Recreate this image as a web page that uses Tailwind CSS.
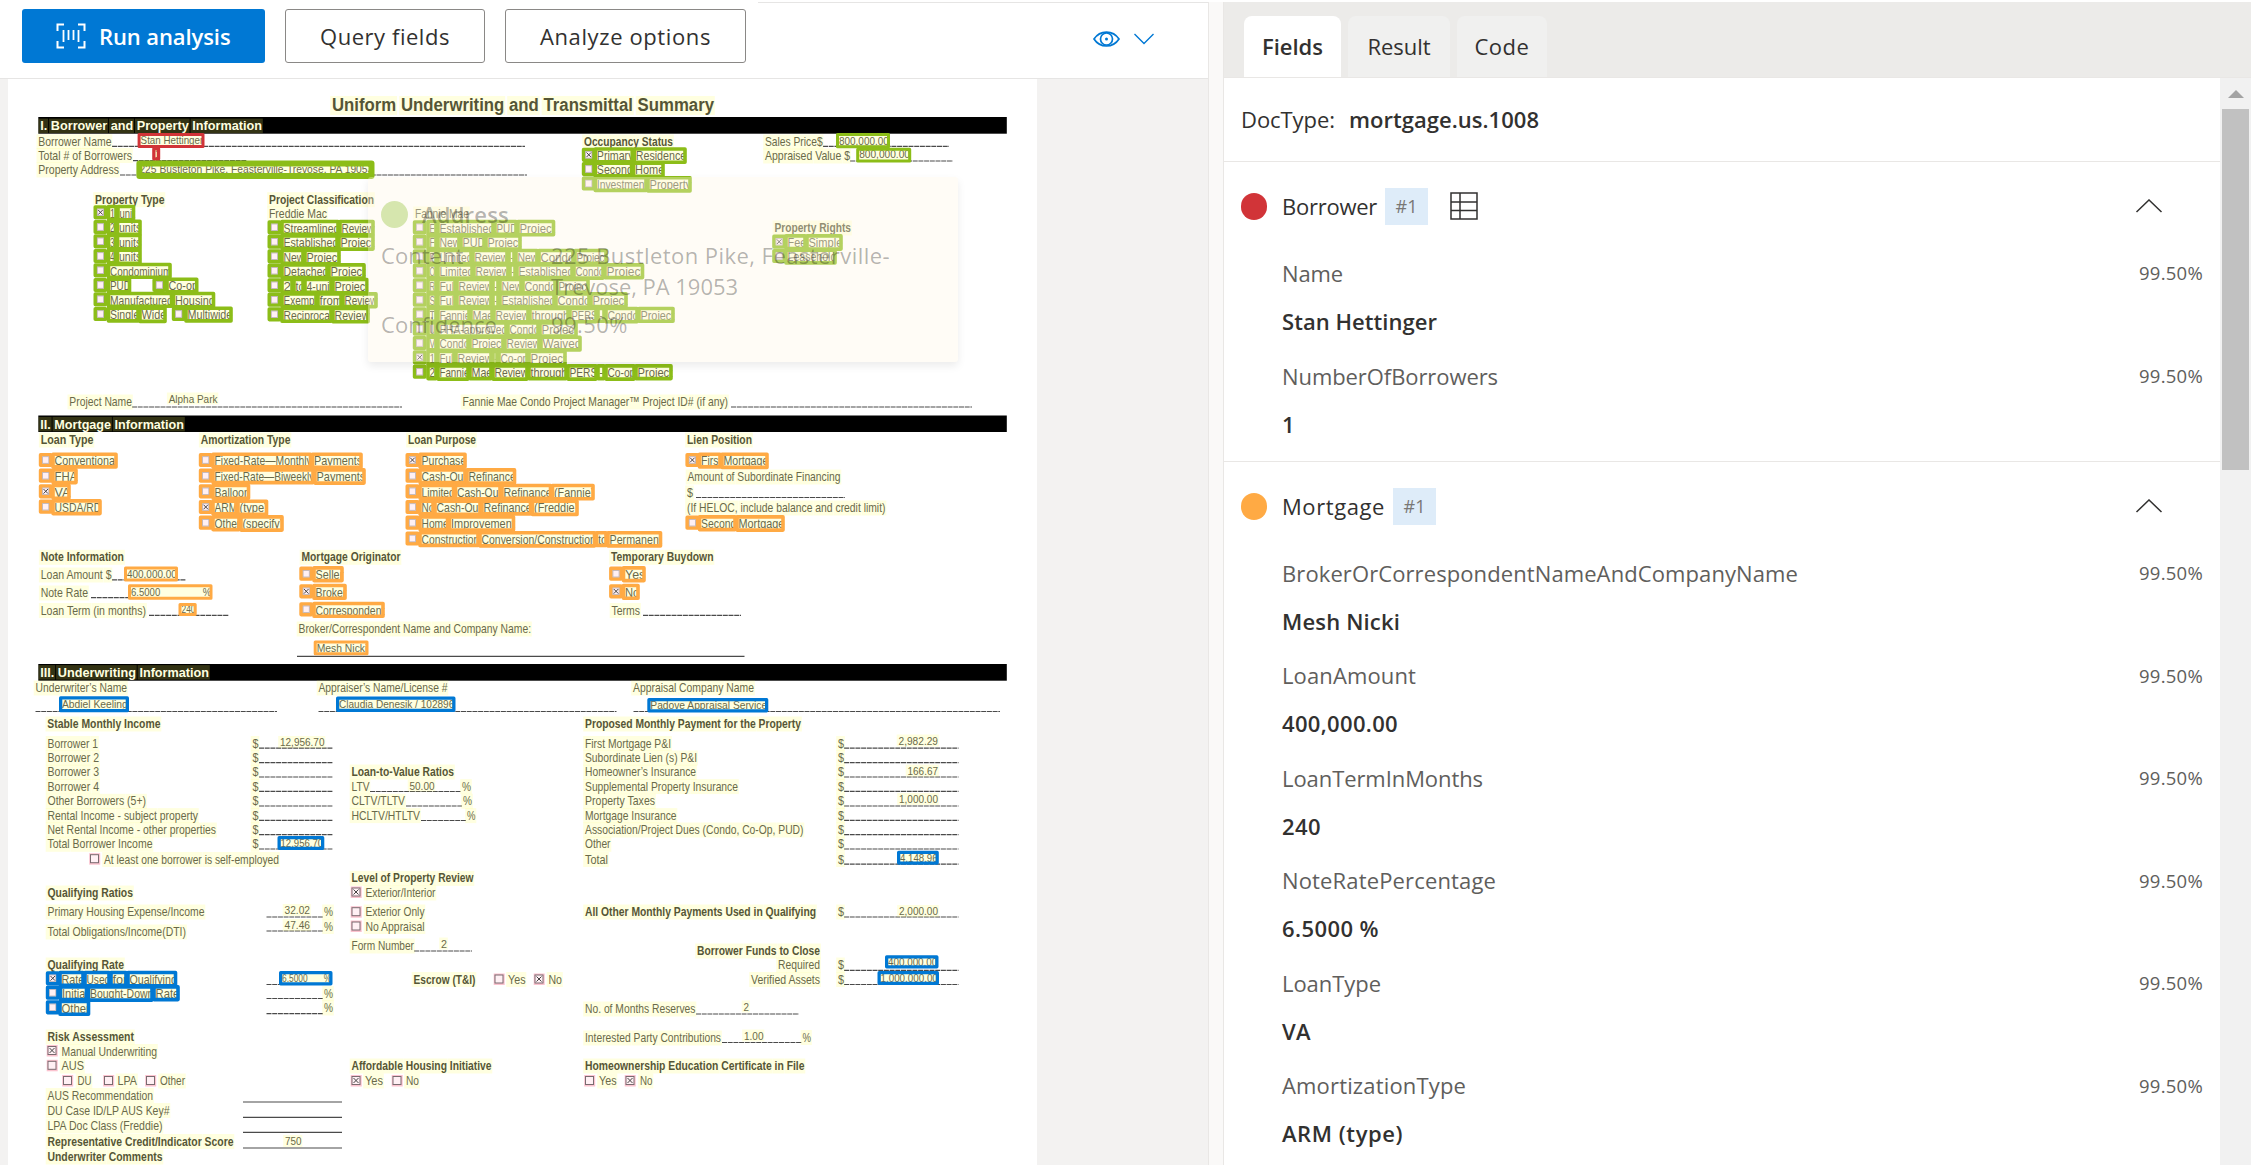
<!DOCTYPE html>
<html lang="en">
<head>
<meta charset="utf-8">
<title>Document analysis</title>
<script src="https://cdn.jsdelivr.net/npm/@tailwindcss/browser@4"></script>
</head>
<body class="h-[1165px] w-[2251px] overflow-hidden bg-white font-['Open_Sans','Noto_Sans',sans-serif] text-[#323130]">
<div class="flex h-full w-full">

  <!-- Document pane -->
  <main class="flex h-full w-[1208px] shrink-0 flex-col">
    <header class="relative flex h-[79px] shrink-0 items-start border-b border-[#e6e5e4] bg-white pl-[22px] pt-[9px] text-[22px]">
      <div class="absolute right-0 top-[2px] h-px w-[450px] bg-[#e6e5e4]"></div>
      <button class="flex h-[54px] w-[243px] items-center rounded-[3px] bg-[#0078d4] pl-[34px] font-semibold text-white">
        <svg class="mr-[13px] h-[26px] w-[30px] shrink-0" viewBox="0 0 30 26" fill="none" stroke="currentColor" stroke-width="2"><path d="M8 1.500H1.500V8M22 1.500h6.500V8M8 24.500H1.500V18M22 24.500h6.500V18"/><path stroke-width="1.800" d="M7.500 7v12M12.500 7v10M17.500 7v10M22.500 7v12"/></svg>
        <span data-w="131.500">Run analysis</span>
      </button>
      <button class="ml-5 flex h-[54px] w-[200px] items-center justify-center rounded-[3px] border border-[#8a8886]"><span data-w="130">Query fields</span></button>
      <button class="ml-5 flex h-[54px] w-[241px] items-center justify-center rounded-[3px] border border-[#8a8886]"><span data-w="171">Analyze options</span></button>
      <div class="ml-auto flex items-center gap-[14px] pr-[54px] pt-[22px] text-[#0078d4]">
        <svg class="h-[16px] w-[27px]" viewBox="0 0 27 16" fill="none" stroke="currentColor" stroke-width="1.700"><path d="M1 8C7-1.300 20-1.300 26 8 20 17.300 7 17.300 1 8Z"/><circle cx="13.500" cy="8" r="6"/><circle cx="13.500" cy="8" r="1.500" fill="currentColor" stroke="none"/></svg>
        <svg class="h-[12px] w-[20px]" viewBox="0 0 20 12" fill="none" stroke="currentColor" stroke-width="1.400"><path d="M.5 1 10 10.500 19.500 1"/></svg>
      </div>
    </header>
    <div class="relative min-h-0 flex-1 bg-[#f3f2f1] pl-2">
      <svg id="page" class="block h-[1086px] w-[1029px] bg-white" font-family="Liberation Sans, Arial, sans-serif" viewBox="8 79 1029 1086"></svg>
      <!-- Fading hover card over the address -->
      <div class="absolute left-[368px] top-[98px] h-[185px] w-[590px] rounded-[3px] bg-[rgb(255,246,230)]/35 px-[13px] pt-[22px] text-[22px] leading-[31px] text-black/30 shadow-[0_4px_8px_rgba(0,0,0,0.08)]">
        <div class="flex items-center gap-[14px] font-semibold"><i class="h-[27px] w-[27px] rounded-full bg-[#d6e6ae]"></i><span data-w="87">Address</span></div>
        <div class="mt-[10px] grid grid-cols-[170px_1fr] gap-y-[7px]">
          <span><span data-w="82.500">Content</span></span>
          <span><span data-w="339">225 Bustleton Pike, Feasterville-</span><br><span data-w="187">Trevose, PA 19053</span></span>
          <span><span data-w="116">Confidence</span></span>
          <span><span data-w="77">99.50%</span></span>
        </div>
      </div>
    </div>
  </main>

  <div class="mt-[2px] w-4 shrink-0 border-x border-[#e9e7e5] bg-[#faf9f8]"></div>

  <!-- Results pane -->
  <aside class="flex min-w-0 flex-1 flex-col pt-[2px]">
    <nav class="flex h-[76px] shrink-0 items-end gap-[7px] border-b border-[#e9e7e5] bg-[#ecebe9] pl-5 text-[22px]">
      <a class="flex h-[61px] w-[97px] items-center justify-center rounded-t-lg bg-white font-semibold"><span data-w="61">Fields</span></a>
      <a class="flex h-[61px] w-[102px] items-center justify-center rounded-t-lg bg-[#f0f0ef]"><span data-w="63">Result</span></a>
      <a class="flex h-[61px] w-[90px] items-center justify-center rounded-t-lg bg-[#f0f0ef]"><span data-w="55">Code</span></a>
    </nav>
    <div class="flex min-h-0 flex-1">
      <div id="fields" class="min-w-0 flex-1 overflow-hidden text-[22px]">
        <div class="flex h-[84px] items-center gap-[14px] border-b border-[#e9e7e5] pl-[17px]"><span data-w="94">DocType:</span><span data-w="190" class="font-semibold">mortgage.us.1008</span></div>
      </div>
      <div class="flex w-[31px] shrink-0 flex-col items-center bg-[#f1f1f1]">
        <svg class="mt-[12px] h-[8px] w-[16px] fill-[#a3a3a3]" viewBox="0 0 16 8"><path d="M8 0l8 8H0z"/></svg>
        <div class="mt-[11px] h-[361px] w-[27px] bg-[#c1c1c1]"></div>
      </div>
    </div>
  </aside>
</div>

<script>
/* ---------- Extracted field list ---------- */
const sections = [
  {name:'Borrower', w:95, dot:'bg-[#d13438]', row:'h-[103px]', table:true, rows:[['Name',61,'Stan Hettinger',155],['NumberOfBorrowers',216,'1',11]]},
  {name:'Mortgage', w:103, dot:'bg-[#ffaa44]', row:'h-[102.5px]', rows:[['BrokerOrCorrespondentNameAndCompanyName',516,'Mesh Nicki',118],['LoanAmount',134,'400,000.00',116],['LoanTermInMonths',201,'240',39],['NoteRatePercentage',214,'6.5000 %',97],['LoanType',99,'VA',29],['AmortizationType',184,'ARM (type)',121]]}
];
const tableIcon = '<svg class="ml-[22px] h-[28px] w-[28px]" viewBox="0 0 28 28" fill="none" stroke="#323130" stroke-width="1.500"><path d="M1 1h26v26H1zM1 10h26M1 18.500h26M10 1v26"/></svg>';
document.getElementById('fields').insertAdjacentHTML('beforeend', sections.map(s => `
  <section class="border-b border-[#e9e7e5] pb-[5px] pl-[17px] pr-[17px]">
    <div class="flex h-[88px] items-center">
      <i class="mr-[15px] h-[27px] w-[26px] rounded-full ${s.dot}"></i>
      <span data-w="${s.w}">${s.name}</span>
      <span class="ml-[8px] flex h-[37px] w-[43px] items-center justify-center bg-[#deecf9] text-[18px] text-[#797775]"><span data-w="22">#1</span></span>
      ${s.table ? tableIcon : ''}
      <svg class="ml-auto mr-[40px] h-[14px] w-[28px]" viewBox="0 0 28 14" fill="none" stroke="#323130" stroke-width="1.500"><path d="M1.500 13 14 1l12.500 12"/></svg>
    </div>
    ${s.rows.map(r => `
    <div class="${s.row} pl-[41px]">
      <div class="flex h-[46px] items-center justify-between text-[#605e5c]"><span data-w="${r[1]}">${r[0]}</span><span data-w="64" class="text-[18.5px]">99.50%</span></div>
      <div class="flex h-[50px] items-center font-semibold"><span data-w="${r[3]}">${r[2]}</span></div>
    </div>`).join('')}
  </section>`).join(''));

/* Track each label to its set width; size and weight come from the class names */
const ctx = document.createElement('canvas').getContext('2d');
document.querySelectorAll('[data-w]').forEach(e => {
  let size = 0;
  for (let p = e; p && !size; p = p.parentElement) { const m = /text-\[([\d.]+)px\]/.exec(p.getAttribute('class') || ''); if (m) size = +m[1]; }
  ctx.font = `${e.closest('.font-semibold') ? 600 : 400} ${size}px "Open Sans"`;
  e.style.whiteSpace = 'nowrap';
  e.style.letterSpacing = ((+e.dataset.w - ctx.measureText(e.textContent).width) / e.textContent.length).toFixed(3) + 'px';
});

/* ---------- Scanned form ---------- */
const page = document.getElementById('page');
const el = (tag, a, text) => { const n = document.createElementNS('http://www.w3.org/2000/svg', tag); for (const k in a) n.setAttribute(k, a[k]); if (text) n.textContent = text; page.appendChild(n); return n; };
const rows = s => s.trim().split('\n').map(l => l.trim()).filter(Boolean);
const HL = 'rgba(255,255,100,.2)';
const COL = {g:'#8cbd18', o:'#ffaa44', b:'#0078d4', r:'#d13438'};
const ST = {
  n:{s:13, w:400, f:'#444', u:11.5, d:3.5}, b:{s:13, w:700, f:'#2b2b2b', u:11.5, d:3.5},
  v:{s:11.500, w:400, f:'#444', u:10, d:2}, w:{s:13, w:700, f:'#fff', u:11.700, d:2.800}, h:{s:17.500, w:700, f:'#2b2b2b', u:15, d:4}
};
function text(x1, x2, y, st, str, mark = true) {
  const s = ST[st];
  const t = el('text', {x:x1, y, 'font-size':s.s, 'font-weight':s.w, fill:s.f, textLength:x2-x1, lengthAdjust:'spacingAndGlyphs'}, str);
  if (!mark) return;
  let i = 0;
  for (const word of str.split(' ')) {
    const a = t.getStartPositionOfChar(i).x, b = t.getEndPositionOfChar(i + word.length - 1).x;
    el('rect', {x:a-1.800, y:y-s.u, width:b-a+2.600, height:s.u+s.d, fill:HL});
    i += word.length + 1;
  }
}
function box(x1, x2, y1, y2, c, sw = 3) {
  el('rect', {x:x1+sw/2, y:y1+sw/2, width:x2-x1-sw, height:y2-y1-sw, fill:HL, stroke:c, 'stroke-width':sw, 'stroke-linejoin':'round'});
}
function tick(x, cy, on, dark) {
  el('rect', {x:x+.5, y:cy-4, width:8, height:8, fill:'#fff0f4', stroke:dark, 'stroke-width':1});
  if (on) el('path', {d:`M${x+2} ${cy-2.500}l5 5m0-5l-5 5`, stroke:'#444', 'stroke-width':1, fill:'none'});
}

[[117,133.700],[415.500,432],[664,680.700]].forEach(([a,b]) => el('rect', {x:38.300, y:a, width:968.500, height:b-a, fill:'#000'}));

/* Rules: x1 x2 y, d = underscored, s = solid */
rows(`112 525 146.300 d
133 247 160.600 d
120 527 175 d
823 949 146.300 d
850 953 161 d
132 402 407 d
731 972 407 d
696 845 497.500 d
112 186 579.800 d
91 212 597.600 d
149 229 615.300 d
643 741 615.300 d
297 744.500 656.300 s
35.500 277 711.500 d
318.500 616.500 711.500 d
633.500 1000 711.500 d
370 461 791.500 d
406 462 806 d
421 466 820.500 d
414 472 951 d
266.500 323 917 d
266.500 323 931 d
266.500 323 984.500 d
266.500 323 998.500 d
266.500 323 1013.700 d
844 958.500 917 d
844 958.500 970.300 d
844 958.500 984.500 d
696 799 1014 d
722 802 1042.500 d
243 342 1102 s
243 342 1117.300 s
243 342 1132.300 s
243 342 1148 s`).forEach(l => { const [a,b,y,k] = l.split(' '); el('path', {d:`M${a} ${y}H${b}`, stroke:'#4a4a4a', 'stroke-width':1.200, 'stroke-dasharray': k === 'd' ? '5 .700' : 'none'}); });
const money = [747.500,762,776.300,790.600,805.300,819.600,834,848.300,863.500];
money.forEach((y,i) => {
  if (i < 8) { el('path', {d:`M259 ${y+.700}H332.500`, stroke:'#4a4a4a', 'stroke-width':1.200, 'stroke-dasharray':'5 .700'}); text(252.500,258.500,y,'n','$'); }
  el('path', {d:`M844 ${y+.700}H958.500`, stroke:'#4a4a4a', 'stroke-width':1.200, 'stroke-dasharray':'5 .700'}); text(838,844,y,'n','$');
});

/* Printed text: x1 x2 baseline style text */
rows(`332 714 111 h Uniform Underwriting and Transmittal Summary
40.300 262 130.300 w I. Borrower and Property Information
38.300 111.500 145.700 n Borrower Name
38.300 132 159.500 n Total # of Borrowers
38.300 119 174 n Property Address
584 673 146 b Occupancy Status
765 822.600 146 n Sales Price$
765 850 160 n Appraised Value $
95 164.500 203.700 b Property Type
269 374 203.700 b Project Classification
269 327 218 n Freddie Mac
415 469 218 n Fannie Mae
774.400 851 232 b Property Rights
69.300 132 406 n Project Name
168.700 217.500 402.500 v Alpha Park
462.500 728 406 n Fannie Mae Condo Project Manager™ Project ID# (if any)
40.300 184 428.600 w II. Mortgage Information
40.700 93.500 444 b Loan Type
200.700 290.500 444 b Amortization Type
408 476 444 b Loan Purpose
687 752 444 b Lien Position
687.500 840.500 481 n Amount of Subordinate Financing
687 693 497 n $
687 885.500 512 n (If HELOC, include balance and credit limit)
40.700 124 561.300 b Note Information
301.500 400.500 561.300 b Mortgage Originator
611 713.500 561.300 b Temporary Buydown
40.700 111.500 579 n Loan Amount $
40.700 88 597 n Note Rate
40.700 146 614.500 n Loan Term (in months)
611.500 640 614.500 n Terms
298.500 531 633 n Broker/Correspondent Name and Company Name:
40.300 209 676.800 w III. Underwriting Information
35.500 127 692 n Underwriter’s Name
318.500 447.500 692 n Appraiser’s Name/License #
633 754 692 n Appraisal Company Name
47.300 160.500 728 b Stable Monthly Income
585 801 728 b Proposed Monthly Payment for the Property
47.500 98 747.500 n Borrower 1
47.500 99 762 n Borrower 2
47.500 99 776.300 n Borrower 3
47.500 99 790.600 n Borrower 4
47.500 146 805.300 n Other Borrowers (5+)
47.500 198 819.600 n Rental Income - subject property
47.500 216 834 n Net Rental Income - other properties
47.500 152.500 848.300 n Total Borrower Income
104 279 863.500 n At least one borrower is self-employed
280 324.500 746 v 12,956.70
351.500 454 776 b Loan-to-Value Ratios
351.500 369.500 790.600 n LTV
409.500 434.500 789.500 v 50.00
462 471 790.600 n %
351.500 405 805.300 n CLTV/TLTV
463 472 805.300 n %
351.500 420 819.600 n HCLTV/HTLTV
467 475.500 819.600 n %
351.500 473.500 882.400 b Level of Property Review
365.500 435.500 897 n Exterior/Interior
365.500 424.500 916 n Exterior Only
365.500 424.500 930.500 n No Appraisal
351.500 414 950 n Form Number
441 447 947.500 v 2
585 671 747.500 n First Mortgage P&I
585 697 762 n Subordinate Lien (s) P&I
585 696 776.300 n Homeowner’s Insurance
585 738 790.600 n Supplemental Property Insurance
585 655 805.300 n Property Taxes
585 676.500 819.600 n Mortgage Insurance
585 803.500 834 n Association/Project Dues (Condo, Co-Op, PUD)
585 610.500 848.300 n Other
585 608 863.500 n Total
898.500 938 744.500 v 2,982.29
907.500 938 774.600 v 166.67
899 938 803 v 1,000.00
585 816 916 b All Other Monthly Payments Used in Qualifying
838 844 916 n $
899 938 915 v 2,000.00
697 820 955 b Borrower Funds to Close
778 820 969 n Required
751 820 983.500 n Verified Assets
838 844 969 n $
838 844 983.500 n $
47.500 133 897 b Qualifying Ratios
47.500 204.500 916 n Primary Housing Expense/Income
47.500 186 936 n Total Obligations/Income(DTI)
284.500 310 914 v 32.02
284.500 310 929 v 47.46
324 333 916 n %
324 333 930.500 n %
47.500 124 969 b Qualifying Rate
324 333 997.500 n %
324 333 1012 n %
413.500 475.500 983.500 b Escrow (T&I)
508 525.500 983.500 n Yes
548.500 562 983.500 n No
585 695.500 1013 n No. of Months Reserves
743.500 749 1010.500 v 2
585 721 1042 n Interested Party Contributions
744 763.500 1039.500 v 1.00
802.500 811 1041.500 n %
47.500 134 1041 b Risk Assessment
61.500 157 1055.500 n Manual Underwriting
61.500 84 1070 n AUS
77.500 91.500 1085 n DU
117.500 137 1085 n LPA
160 185 1085 n Other
47.500 153 1099.500 n AUS Recommendation
47.500 169.500 1114.500 n DU Case ID/LP AUS Key#
47.500 162.500 1130 n LPA Doc Class (Freddie)
47.500 233.500 1145.500 b Representative Credit/Indicator Score
285 301.500 1145 v 750
47.500 162.500 1161 b Underwriter Comments
351.500 491.500 1070 b Affordable Housing Initiative
365 383 1085 n Yes
406 419 1085 n No
585 804.500 1070 b Homeownership Education Certificate in File
599 616.500 1085 n Yes
640 652.500 1085 n No`).forEach(l => { const [a,b,y,s,...t] = l.split(' '); text(+a, +b, +y, s, t.join(' ')); });

/* Unmatched selection marks: x cy state */
rows(`90 858.700 o
351.500 892 x
351.500 911.700 o
351.500 926 o
494.500 979 o
534.500 979 x
47.500 1050.500 x
47.500 1065.300 o
63 1080.500 o
104 1080.500 o
146 1080.500 o
351.500 1080.500 x
392.500 1080.500 o
585 1080.500 o
625.500 1080.500 x`).forEach(l => { const [x,y,k] = l.split(' '); el('rect', {x:x-.800, y:y-5.500, width:11, height:11.500, fill:'#fbc3cf'}); tick(+x, +y, k === 'x', '#7a6b70'); });

/* Matched words: colour, mark x, centre y, state, left edge, then word / right edge pairs */
rows(`g 582 154.800 x 594.300 Primary 633.200 Residence 686
g 582 169 o 594.300 Second 632.500 Home 664
g 582 183.500 o 594.300 Investment 647 Property 691
g 93.700 212.300 x 107.500 1 117 unit 134.500
g 93.700 227 o 107.500 2 116.500 units 141
g 93.700 241.300 o 107.500 3 116.500 units 141
g 93.700 256 o 107.500 4 116.500 units 141
g 93.700 270.300 o 107.500 Condominium 171
g 93.700 285 o 107.500 PUD 130.500
g 152.600 285 o 166 Co-op 197.700
g 93.700 299.300 o 107.500 Manufactured 172.500 Housing 214.500
g 93.700 314 o 107.500 Single 139 Wide 166
g 172 314 o 185 Multiwide 232
g 267.700 227.300 o 281 Streamlined 339 Review 374
g 267.700 241.700 o 281 Established 338 Project 374
g 267.700 256.300 o 281 New 304 Project 340
g 267.700 270.700 o 281 Detached 328 Project 365
g 267.700 285.300 o 281 2 293 to 304 4-unit 332 Project 368
g 267.700 299.700 o 281 Exempt 317 from 342 Review 377
g 267.700 314.300 o 281 Reciprocal 332 Review 369
g 413 227.300 o 427 E 437 Established 494 PUD 517 Project 554.500
g 413 241.700 o 427 F 437 New 460 PUD 485 Project 521
g 413 256.300 o 427 P 437 Limited 472 Review 508 – 515 New 538 Condo 574 Project 607
g 413 270.700 o 427 Q 437 Limited 473 Review 509 – 516 Established 573 Condo 604 Project 643.500
g 413 285.300 o 427 R 437 Full 456 Review 492 – 499 New 522 Condo 556 Project 589
g 413 299.700 o 427 S 437 Full 456 Review 492 – 499 Established 555 Condo 590 Project 627
g 413 314.300 o 427 T 437 Fannie 470 Mae 493 Review 529 through 569 PERS 597 – 605 Condo 638 Project 674
g 413 328.700 o 427 U 437 FHA-approved 507 Condo 539 Project 577
g 413 343 o 427 V 437 Condo 469 Project 504 Review 540 Waived 581
g 413 357.300 x 427 1 437 Full 455 Review 492 – 498 Co-op 528 Project 566
g 413 371.700 o 427 2 437 Fannie 469 Mae 492 Review 528 through 567 PERS 597 – 605 Co-op 635 Project 672
g 772.400 241.700 x 785 Fee 806 Simple 842
g 772.400 256 o 785 Leasehold 836
o 39 460 o 52 Conventional 117
o 39 475.700 o 52 FHA 77
o 39 491.300 x 52 VA 70
o 39 506.700 o 52 USDA/RD 101
o 199 460 o 212 Fixed-Rate—Monthly 311.500 Payments 362
o 199 475.700 o 212 Fixed-Rate—Biweekly 314 Payments 365
o 199 491.300 o 212 Balloon 249.500
o 199 507 x 212 ARM 237 (type) 267.500
o 199 522.700 o 212 Other 240 (specify) 283
o 405.700 460 x 419 Purchase 466
o 405.700 475.700 o 419 Cash-Out 466 Refinance 515.500
o 405.700 491.300 o 419 Limited 454.500 Cash-Out 501 Refinance 551.500 (Fannie) 594
o 405.700 507 o 419 No 434 Cash-Out 481 Refinance 531.500 (Freddie) 578
o 405.700 522.700 o 419 Home 448.500 Improvement 514.500
o 405.700 538.500 o 419 Construction 479 Conversion/Construction 595.500 to 607 Permanent 661.500
o 685.600 460 x 698.500 First 721 Mortgage 768
o 685.600 522.700 o 698.500 Second 736 Mortgage 784
o 299.500 573.700 o 313 Seller 343
o 299.500 591.300 x 313 Broker 346
o 299.500 609.300 o 313 Correspondent 384
o 609.300 573.700 o 622.500 Yes 645
o 609.300 591.300 x 622.500 No 639
b 46 978.300 x 59 Rate 84 Used 110 for 127 Qualifying 176.500
b 46 992.700 o 59.500 Initial 87.500 Bought-Down 153 Rate 179
b 46 1007.300 o 59 Other 89.500`).forEach(l => {
  const p = l.split(' '), c = COL[p[0]], x = +p[1], cy = +p[2];
  el('rect', {x:x+1.600, y:cy-5.300, width:10.200, height:10.600, fill:'#fff0f4', stroke:c, 'stroke-width':3.600, 'stroke-linejoin':'round'});
  el('rect', {x:x+3.600, y:cy-3.300, width:6.200, height:6.600, fill:'#fff0f4', stroke:'#b9b0b4', 'stroke-width':.800});
  if (p[3] === 'x') el('path', {d:`M${x+4.500} ${cy-2.300}l4.500 4.600m0-4.600l-4.500 4.600`, stroke:'#444', 'stroke-width':1, fill:'none'});
  const parts = []; let a = +p[4];
  for (let i = 5; i < p.length; i += 2) { parts.push([a, +p[i+1], p[i]]); a = +p[i+1]; }
  parts.forEach(([a,b,t]) => text(a+2.500, b-(t.length > 1 ? -.300 : 2), cy+5.300, 'n', t, false));
  parts.forEach(([a,b], i) => box(a-.800, b+.800, cy-7.600, cy+8.700+(i%2 ? .500 : 0), c, 3.600));
});

/* Matched values: colour x1 x2 y1 y2 baseline stroke text */
rows(`r 137.600 204.500 133 148 143.700 3 Stan Hettinger
r 152.200 160.200 147 160.700 157.500 3.300 1
g 136.400 374.500 160.500 179 172.700 6 225 Bustleton Pike, Feasterville-Trevose, PA 19053
g 836 890 133 148.200 144.500 3 800,000.00
g 856.200 911.200 147.700 162.500 158.300 3 800,000.00
o 124 178 566.500 581.500 578 3 400,000.00
o 128 212.500 584.300 599.700 596.200 3 6.5000                %
o 178.500 196.700 603 616 613 3 240
o 313.700 368.500 640.500 655.300 652 3 Mesh Nicki
b 59 129 696.300 712.300 707.500 3.300 Abdiel Keeling
b 336 455.500 696.500 712 708 3.300 Claudia Denesik / 102896
b 647.300 768.300 698 712.500 709.300 3.300 Padove Appraisal Service
b 277.500 324.300 836 850 846.500 3.300 12,956.70
b 897 938.800 850.700 864.700 861.700 3.300 4,148.96
b 885 938.500 955.300 968.500 965.500 3.300 400,000.00
b 877.500 939 971 985 981.700 3.300 1,000,000.00
b 279 332.500 971 985.500 982 3.300 6.5000       %`).forEach(l => {
  const p = l.split(' '), [x1,x2,y1,y2,bl,sw] = p.slice(1,7).map(Number);
  text(x1+3, x2-1.200, bl, 'v', p.slice(7).join(' ').replace(/  +/g, m => '\u00a0'.repeat(m.length)), false);
  box(x1, x2, y1, y2, COL[p[0]], sw);
});
</script>
</body>
</html>
